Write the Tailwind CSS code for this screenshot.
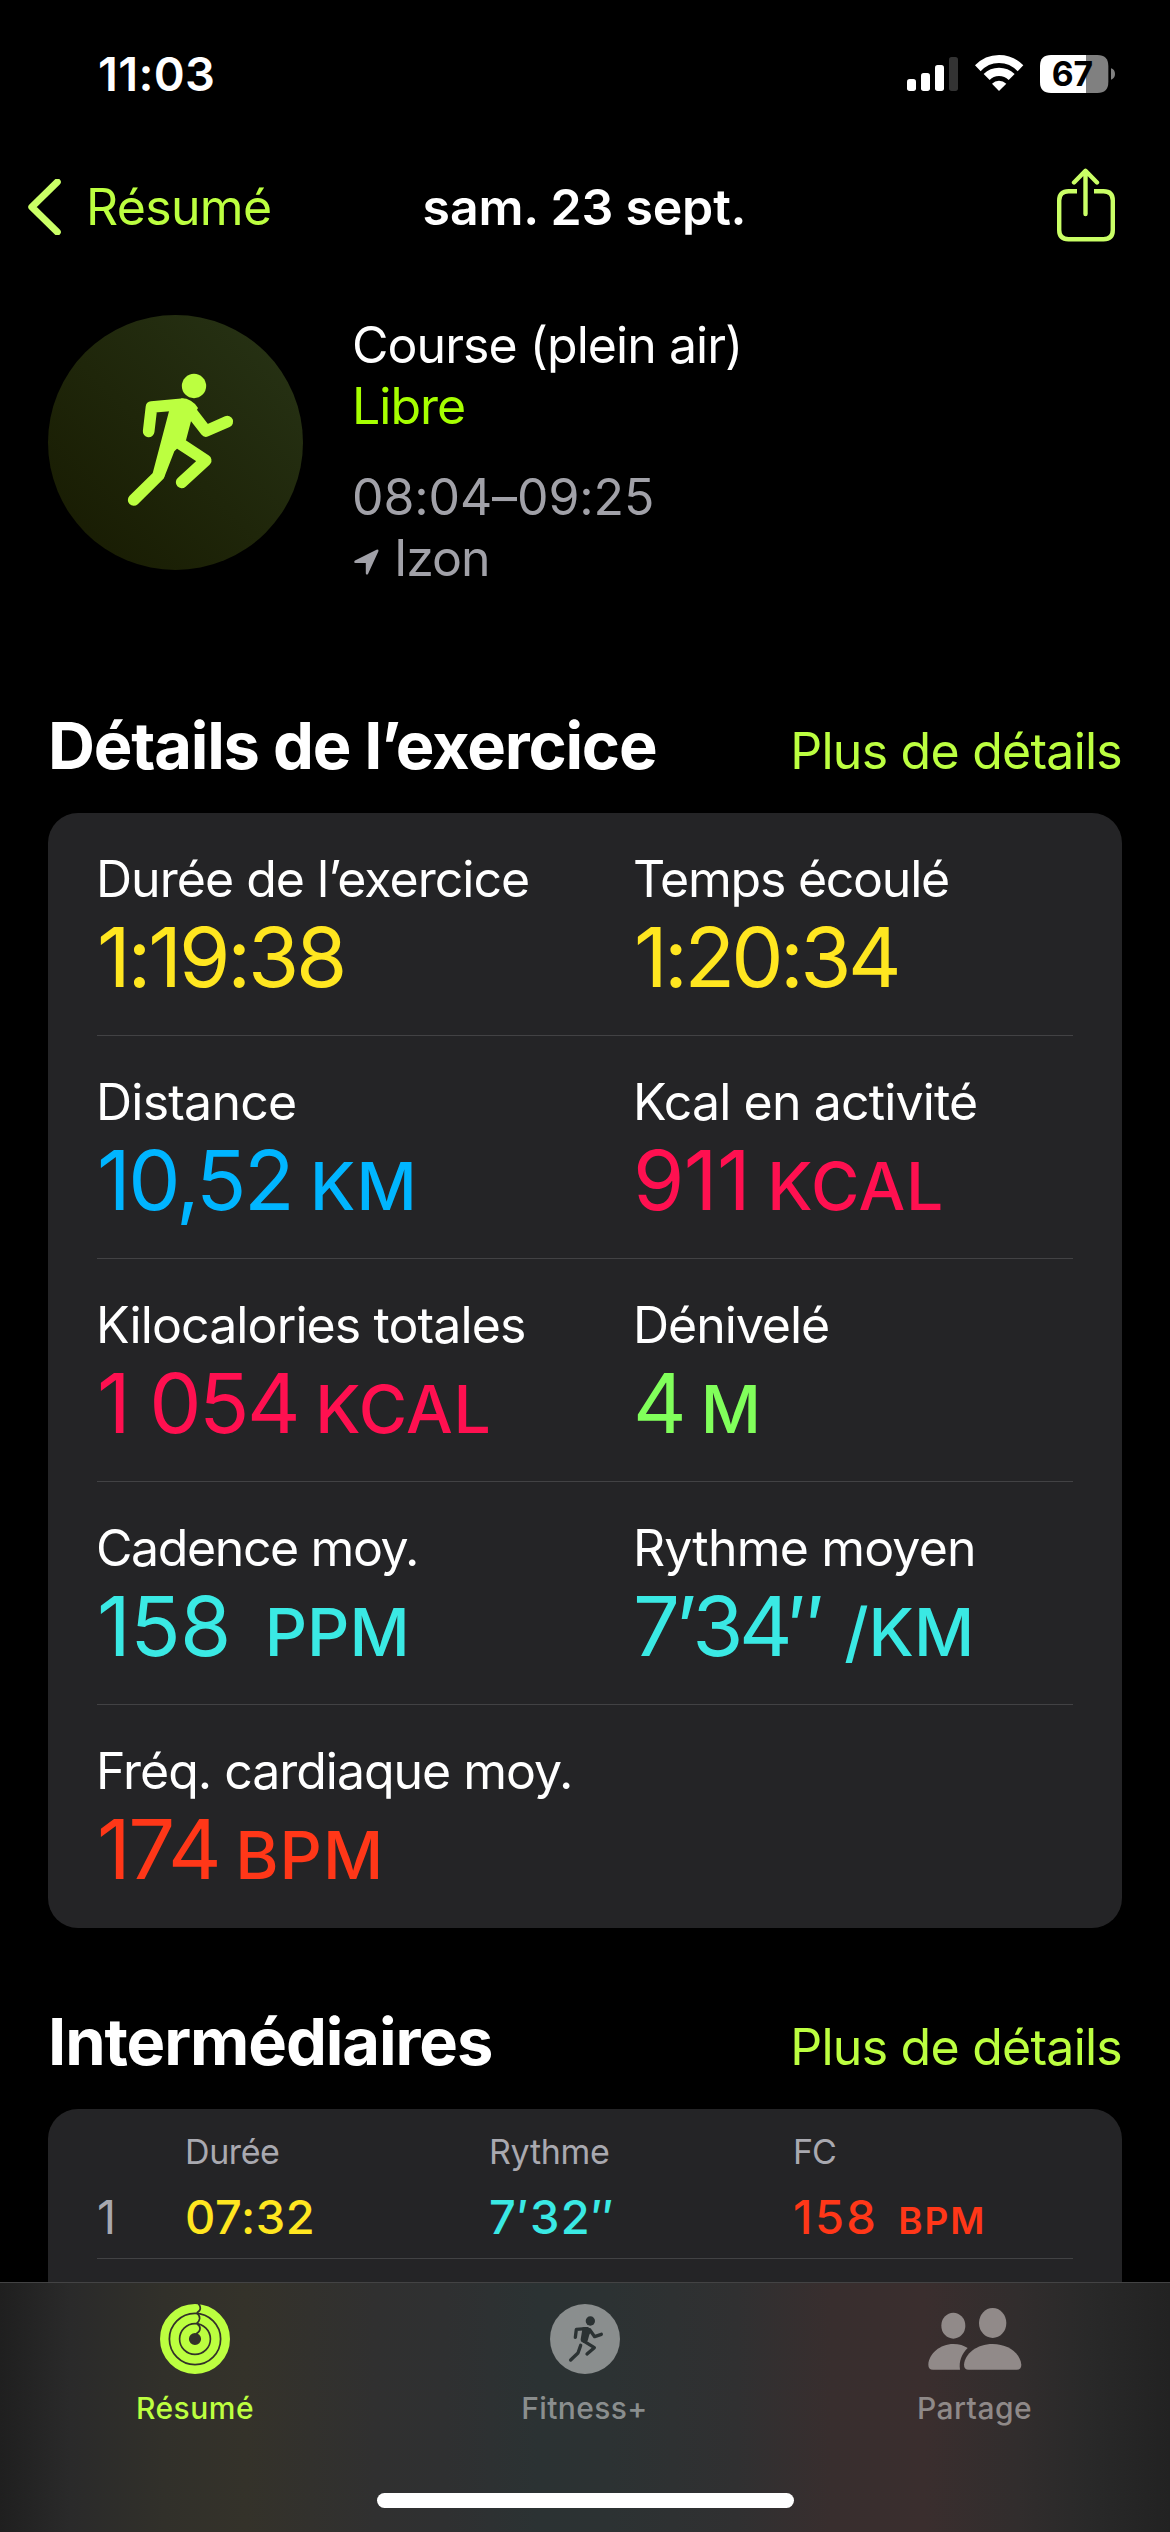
<!DOCTYPE html>
<html lang="fr">
<head>
<meta charset="utf-8">
<title>Exercice – sam. 23 sept.</title>
<script src="https://cdn.jsdelivr.net/npm/@tailwindcss/browser@4"></script>
</head>
<body class="bg-black">
<div class="relative flex h-[2532px] w-[1170px] flex-col overflow-hidden bg-black font-['Inter',sans-serif] text-[50px] leading-[60px] text-white">

  <!-- Status bar -->
  <header class="flex h-[122px] shrink-0 items-start justify-between pr-[20px] pl-[98px]">
    <span class="pt-[44px] text-[47px] font-semibold tracking-[0.32px]">11:03</span>
    <svg class="mt-[40px] h-[70px] w-[260px]" viewBox="0 0 780 210" fill="#fff">
      <rect x="51" y="117" width="27" height="36" rx="8"/>
      <rect x="93" y="99" width="27" height="54" rx="8"/>
      <rect x="135" y="75" width="27" height="78" rx="8"/>
      <rect x="177" y="51" width="27" height="102" rx="8" fill="#333"/>
      <path d="M255 76Q285 45 327 45T400 76L383 94Q360 69 327 69T272 94Z"/>
      <path d="M281 102Q300 83 327 83T374 102L356 120Q344 108 327 108T299 120Z"/>
      <path d="M306 131Q315 122 327 122T349 131L327 153Z"/>
      <path d="M483 45H588V159H483Q450 159 450 126V78Q450 45 483 45Z"/>
      <path d="M588 45H622Q655 45 655 78V126Q655 159 622 159H588Z" fill="#808080"/>
      <path d="M663 85Q675 89 675 102T663 119Z" fill="#808080"/>
      <text x="485" y="138" fill="#000" class="text-[101px] font-bold tracking-[0px]">67</text>
    </svg>
  </header>

  <!-- Navigation -->
  <nav class="grid h-[170px] shrink-0 grid-cols-3 items-center pr-[55px] pl-[26px]">
    <a class="flex items-center gap-[23px] tracking-[-0.67px] text-[#bcff40]">
      <svg class="h-[56px] w-[37px]" viewBox="0 0 37 56" fill="none" stroke="#caff66" stroke-width="7" stroke-linecap="round" stroke-linejoin="round"><path d="M31.3 3L5.8 28L31.3 53"/></svg>
      Résumé
    </a>
    <h1 class="pl-[28px] text-center font-semibold tracking-[-0.18px] whitespace-nowrap">sam. 23 sept.</h1>
    <svg class="mb-[4px] h-[74px] w-[60px] justify-self-end" viewBox="0 0 60 74" fill="none" stroke="#caff66" stroke-width="4.4" stroke-linecap="round" stroke-linejoin="round">
      <path stroke-linecap="butt" d="M22 23.2H13.5Q4.2 23.2 4.2 32.5V62Q4.2 71.2 13.5 71.2H48.5Q57.8 71.2 57.8 62V32.5Q57.8 23.2 48.5 23.2H39"/>
      <path d="M30.500 46V3M19 14.500L30.500 2.800L42 14.500"/>
    </svg>
  </nav>

  <!-- Workout summary -->
  <section class="mt-[23px] flex shrink-0 gap-[49px] pl-[48px]">
    <div class="h-[255px] w-[255px] rounded-full bg-linear-to-tr from-[#171a02] to-[#283416] pt-[45px] pl-[62px]">
      <svg class="h-[160px] w-[140px]" viewBox="0 0 420 480" fill="none" stroke="#bcff40" stroke-width="35" stroke-linecap="round" stroke-linejoin="round">
        <circle cx="252" cy="78" r="36.5" fill="#bcff40" stroke="none"/>
        <path d="M116 214L124.500 141L215 133"/>
        <path d="M236 146L288 213L352 185"/>
        <path d="M212 252L287 301L215 367"/>
        <path d="M146 346L71 420"/>
        <path d="M178 150L128 340L161 356L193 274L228 241L244 180L264 144Q245 115 215 115Z" fill="#bcff40" stroke="none"/>
      </svg>
    </div>
    <div class="flex flex-col leading-[61px]">
      <span class="tracking-[-0.96px]">Course (plein air)</span>
      <span class="tracking-[-1px] text-[#a6ff00]">Libre</span>
      <span class="mt-[30px] tracking-[-0.12px] text-[#a1a1a8]">08:04–09:25</span>
      <span class="flex items-center gap-[15px] pl-[2px] tracking-[-1.1px] text-[#a1a1a8]">
        <svg class="mt-[6px] h-[26px] w-[25px]" viewBox="0 0 25 26" fill="#a1a1a8"><path d="M22.500 .7Q25 0 24.300 2.500L14 25Q12.500 26.500 11.800 24.500V14H1.500Q-.8 13.400 1 11.500Z"/></svg>
        Izon
      </span>
    </div>
  </section>

  <!-- Workout details -->
  <section class="mt-[117px] shrink-0 px-[48px]">
    <div class="flex items-baseline justify-between">
      <h2 class="text-[65px] leading-[80px] font-bold tracking-[-1.2px]">Détails de l’exercice</h2>
      <a class="tracking-[-0.75px] text-[#bcff40]">Plus de détails</a>
    </div>
    <div class="mt-[27px] rounded-[30px] bg-[#242426] px-[49px]">
      <div class="grid h-[223px] grid-cols-[536px_1fr] border-b border-[#424244] pt-[36px]">
        <div class="-ml-px flex flex-col">
          <span class="tracking-[-0.97px]">Durée de l’exercice</span>
          <span class="pl-px text-[83px] leading-[96px] tracking-[-3.18px] text-[#ffe620]">1:19:38</span>
        </div>
        <div class="flex flex-col">
          <span class="tracking-[-1.25px]">Temps écoulé</span>
          <span class="pl-px text-[83px] leading-[96px] tracking-[-3.64px] text-[#ffe620]">1:20:34</span>
        </div>
      </div>
      <div class="grid h-[223px] grid-cols-[536px_1fr] border-b border-[#424244] pt-[36px]">
        <div class="-ml-px flex flex-col">
          <span class="tracking-[-0.77px]">Distance</span>
          <span class="flex items-baseline gap-[18px] text-[83px] leading-[96px] text-[#00b5ff]"><span class="pl-px tracking-[-2.55px]">10,52</span><span class="text-[66px] font-medium tracking-[1px]">KM</span></span>
        </div>
        <div class="flex flex-col">
          <span class="tracking-[-0.86px]">Kcal en activité</span>
          <span class="flex items-baseline gap-[17px] text-[83px] leading-[96px] text-[#ff1050]"><span class="tracking-[-0.61px]">911</span><span class="text-[66px] font-medium tracking-[0.7px]">KCAL</span></span>
        </div>
      </div>
      <div class="grid h-[223px] grid-cols-[536px_1fr] border-b border-[#424244] pt-[36px]">
        <div class="-ml-px flex flex-col">
          <span class="tracking-[-0.89px]">Kilocalories totales</span>
          <span class="flex items-baseline gap-[17px] text-[83px] leading-[96px] text-[#ff1050]"><span class="pl-px tracking-[-2.48px]">1 054</span><span class="text-[66px] font-medium tracking-[0.5px]">KCAL</span></span>
        </div>
        <div class="flex flex-col">
          <span class="tracking-[-1.04px]">Dénivelé</span>
          <span class="flex items-baseline gap-[14px] text-[83px] leading-[96px] text-[#81ff5b]"><span>4</span><span class="text-[66px] font-medium">M</span></span>
        </div>
      </div>
      <div class="grid h-[223px] grid-cols-[536px_1fr] border-b border-[#424244] pt-[36px]">
        <div class="-ml-px flex flex-col">
          <span class="tracking-[-1.4px]">Cadence moy.</span>
          <span class="flex items-baseline gap-[34px] text-[83px] leading-[96px] text-[#3ae9e4]"><span class="pl-px tracking-[-0.61px]">158</span><span class="text-[66px] font-medium">PPM</span></span>
        </div>
        <div class="flex flex-col">
          <span class="tracking-[-0.82px]">Rythme moyen</span>
          <span class="flex items-baseline gap-[24px] text-[83px] leading-[96px] text-[#3ae9e4]"><span class="tracking-[-4.62px]">7’34″</span><span class="text-[66px] font-medium">/KM</span></span>
        </div>
      </div>
      <div class="-ml-px flex h-[223px] flex-col pt-[36px]">
        <span class="tracking-[-1.02px]">Fréq. cardiaque moy.</span>
        <span class="flex items-baseline gap-[16px] text-[83px] leading-[96px] text-[#ff3718]"><span class="pl-px tracking-[-2.45px]">174</span><span class="text-[66px] font-medium tracking-[1px]">BPM</span></span>
      </div>
    </div>
  </section>

  <!-- Splits -->
  <section class="mt-[74px] shrink-0 px-[48px]">
    <div class="flex items-baseline justify-between">
      <h2 class="text-[65px] leading-[80px] font-bold tracking-[-1.09px]">Intermédiaires</h2>
      <a class="tracking-[-0.75px] text-[#bcff40]">Plus de détails</a>
    </div>
    <div class="mt-[27px] h-[300px] rounded-t-[30px] bg-[#242426] px-[49px] pt-[22px]">
      <div class="grid grid-cols-[88px_304px_304px_1fr] text-[34px] leading-[42px] text-[#a9a9b0]">
        <span></span><span class="tracking-[-0.4px]">Durée</span><span class="tracking-[-0.3px]">Rythme</span><span class="tracking-[-1px]">FC</span>
      </div>
      <div class="mt-[14px] grid h-[72px] grid-cols-[88px_304px_304px_1fr] border-b border-[#424244] text-[47px] leading-[60px]">
        <span class="text-[#a9a9b0]">1</span>
        <span class="font-medium tracking-[0.6px] text-[#ffe620]">07:32</span>
        <span class="font-medium tracking-[1.4px] text-[#3ae9e4]">7′32″</span>
        <span class="flex items-baseline gap-[20px] font-medium text-[#ff3718]"><span class="tracking-[2.4px]">158</span><span class="text-[37px] font-semibold tracking-[1.8px]">BPM</span></span>
      </div>
    </div>
  </section>

  <!-- Tab bar -->
  <footer class="absolute inset-x-0 bottom-0 h-[250px] border-t border-[#434344] bg-[linear-gradient(90deg,#1f1f1f_0%,#2a2a2a_6%,#31302a_14%,#34322a_21%,#303030_32%,#2f3031_38%,#2b3233_46%,#2c3233_52%,#303031_63%,#382e2e_71%,#3a2e2e_79%,#312d2d_87%,#292929_93%,#222_100%)]">
    <div class="grid grid-cols-[390px_389px_391px] pt-[21px] text-[30px] leading-[40px] font-medium">
      <div class="flex flex-col items-center gap-[14px] tracking-[0.5px] text-[#bcff40]">
        <svg class="h-[70px] w-[70px]" viewBox="0 0 210 210" fill="none">
          <g stroke="#bcff40" stroke-width="25.500"><circle cx="105" cy="105" r="92.200"/><circle cx="105" cy="105" r="61.500"/><circle cx="105" cy="105" r="31"/></g>
          <g stroke="#31302a" stroke-width="5"><path d="M115 -1Q121 5 121 13T110 27"/><path d="M112 28Q120 36 119 44T110 58"/><path d="M112 60Q121 66 120 75T108 90"/></g>
        </svg>
        Résumé
      </div>
      <div class="flex flex-col items-center gap-[14px] tracking-[0.37px] text-[#8a8e8e]">
        <svg class="h-[70px] w-[70px]" viewBox="0 0 210 210" fill="none" stroke="#2b3233" stroke-width="10" stroke-linecap="round" stroke-linejoin="round">
          <circle cx="105" cy="105" r="105" fill="#8a8e8e" stroke="none"/>
          <circle cx="121" cy="51" r="14" fill="#2b3233" stroke="none"/>
          <path d="M76 100L79 76L108 74"/>
          <path d="M119 77L134 98L154 91"/>
          <path d="M94 121L84 147L62 168" stroke="#8a8e8e" stroke-width="17"/>
          <path d="M98 109L133 131L111 150"/>
          <path d="M92 124L84 147L62 168"/>
          <path d="M98 70L114 69Q122 73 124 82L118 92L113 110L103 117Q91 114 92 106Z" fill="#2b3233" stroke="none"/>
        </svg>
        Fitness+
      </div>
      <div class="flex flex-col items-center gap-[14px] tracking-[0.46px] text-[#8f8988]">
        <svg class="h-[70px] w-[94px]" viewBox="0 -12 280 210" fill="#918a89">
          <ellipse cx="75" cy="53" rx="36" ry="39"/>
          <ellipse cx="193" cy="45" rx="41" ry="45"/>
          <path d="M14 185Q0 185 0 170C2 137 35 108 75 108C92 108 108 113 118 120C100 138 91 160 95 185Z"/>
          <path d="M121 185Q107 185 107 170C110 137 145 108 193 108C241 108 276 137 279 170Q279 185 265 185Z"/>
        </svg>
        Partage
      </div>
    </div>
    <div class="mx-auto mt-[65px] h-[15px] w-[417px] rounded-full bg-white"></div>
  </footer>
</div>
</body>
</html>
